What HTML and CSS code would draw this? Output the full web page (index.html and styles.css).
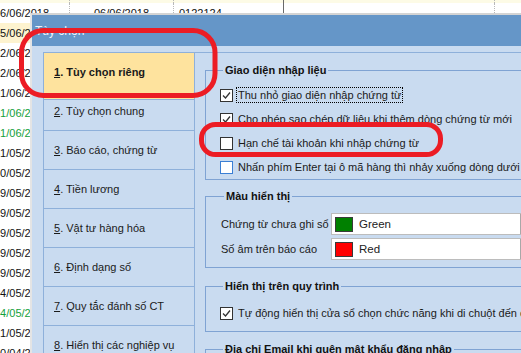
FILE: index.html
```html
<!DOCTYPE html>
<html lang="vi">
<head>
<meta charset="utf-8">
<title>Tùy chọn</title>
<link rel="stylesheet" href="styles.css">
</head>
<body>
<div class="sheet">
  <div class="row row-top"><div class="c c1"></div><div class="c c2"></div><div class="c c3"></div><div class="c c4"></div><div class="c c5"></div></div>
  <div class="row"><div class="c c1">06/06/2018</div><div class="c c2">06/06/2018</div><div class="c c3">0122124</div><div class="c c4"></div><div class="c c5"></div></div>
  <div class="row row-hl"><div class="c c1">05/06/2018</div></div>
  <div class="row"><div class="c c1">02/06/2018</div></div>
  <div class="row"><div class="c c1">02/06/2018</div></div>
  <div class="row"><div class="c c1">01/06/2018</div></div>
  <div class="row row-green"><div class="c c1">01/06/2018</div></div>
  <div class="row row-green"><div class="c c1">01/06/2018</div></div>
  <div class="row"><div class="c c1">31/05/2018</div></div>
  <div class="row"><div class="c c1">30/05/2018</div></div>
  <div class="row"><div class="c c1">29/05/2018</div></div>
  <div class="row"><div class="c c1">29/05/2018</div></div>
  <div class="row"><div class="c c1">29/05/2018</div></div>
  <div class="row"><div class="c c1">29/05/2018</div></div>
  <div class="row"><div class="c c1">29/05/2018</div></div>
  <div class="row"><div class="c c1">24/05/2018</div></div>
  <div class="row row-green"><div class="c c1">24/05/2018</div></div>
  <div class="row"><div class="c c1">21/05/2018</div></div>
  <div class="row"><div class="c c1">30/04/2018</div></div>
</div>

<div class="dialog">
  <div class="titlebar">Tùy chọn</div>
  <div class="dialog-body">
    <div class="panel">
      <div class="nav">
        <div class="nav-item selected"><u>1</u>. Tùy chọn riêng</div>
        <div class="nav-item"><u>2</u>. Tùy chọn chung</div>
        <div class="nav-item"><u>3</u>. Báo cáo, chứng từ</div>
        <div class="nav-item"><u>4</u>. Tiền lương</div>
        <div class="nav-item"><u>5</u>. Vật tư hàng hóa</div>
        <div class="nav-item"><u>6</u>. Định dạng số</div>
        <div class="nav-item"><u>7</u>. Quy tắc đánh số CT</div>
        <div class="nav-item"><u>8</u>. Hiển thị các nghiệp vụ</div>
      </div>
      <div class="content">
        <fieldset class="group group-input">
          <legend>Giao diện nhập liệu</legend>
          <div class="check-row">
            <span class="box checked"><svg viewBox="0 0 11 11" width="11" height="11"><polyline points="2,5.5 4.5,8 9,2.5" /></svg></span>
            <span class="label focus">Thu nhỏ giao diện nhập chứng từ</span>
          </div>
          <div class="check-row">
            <span class="box checked"><svg viewBox="0 0 11 11" width="11" height="11"><polyline points="2,5.5 4.5,8 9,2.5" /></svg></span>
            <span class="label">Cho phép sao chép dữ liệu khi thêm dòng chứng từ mới</span>
          </div>
          <div class="check-row">
            <span class="box"></span>
            <span class="label">Hạn chế tài khoản khi nhập chứng từ</span>
          </div>
          <div class="check-row">
            <span class="box hot"></span>
            <span class="label">Nhấn phím Enter tại ô mã hàng thì nhảy xuống dòng dưới</span>
          </div>
        </fieldset>

        <fieldset class="group group-color">
          <legend>Màu hiển thị</legend>
          <div class="color-grid">
            <span class="color-label">Chứng từ chưa ghi sổ</span>
            <div class="combo"><span class="swatch swatch-green"></span><span class="combo-text">Green</span><span class="combo-btn"></span></div>
            <span class="color-label">Số âm trên báo cáo</span>
            <div class="combo"><span class="swatch swatch-red"></span><span class="combo-text">Red</span><span class="combo-btn"></span></div>
          </div>
        </fieldset>

        <fieldset class="group group-flow">
          <legend>Hiển thị trên quy trình</legend>
          <div class="check-row">
            <span class="box checked"><svg viewBox="0 0 11 11" width="11" height="11"><polyline points="2,5.5 4.5,8 9,2.5" /></svg></span>
            <span class="label">Tự động hiển thị cửa sổ chọn chức năng khi di chuột đến các nghiệp vụ</span>
          </div>
        </fieldset>

        <fieldset class="group group-email">
          <legend>Địa chỉ Email khi quên mật khẩu đăng nhập</legend>
          <div class="check-row"></div>
        </fieldset>
      </div>
    </div>
  </div>
</div>

<svg class="marks" width="521" height="353" viewBox="0 0 521 353">
  <rect x="21.5" y="30.5" width="193.5" height="65" rx="22" ry="22" />
  <rect x="201.5" y="124.5" width="239" height="30" rx="14" ry="14" />
</svg>
</body>
</html>
```

FILE: styles.css
```css
* { box-sizing: border-box; }

html, body {
  margin: 0;
  padding: 0;
}

body {
  width: 521px;
  height: 353px;
  overflow: hidden;
  position: relative;
  background: #ffffff;
  font-family: "Liberation Sans", Arial, sans-serif;
  font-size: 11px;
  color: #1a1a1a;
}

/* background spreadsheet */
.sheet {
  margin-left: -6px;
  width: 540px;
}

.row {
  display: flex;
  height: 20px;
  align-items: center;
  white-space: nowrap;
  color: #111;
}

.row-top {
  height: 3px;
  background: #fdfbe6;
}

.row-hl { background: #fdf3cf; }
.row-green { color: #14a03a; }

.c { height: 100%; display: flex; align-items: center; overflow: hidden; }
.c1 { width: 76px; border-right: 1px dotted #b8b8b8; }
.c2 { width: 104px; padding-left: 24px; border-right: 1px dotted #b8b8b8; }
.c3 { width: 110px; padding-left: 5px; border-right: 1px solid #6a6a6a; }
.c4 { width: 211px; border-right: 1px dotted #b8b8b8; }
.c5 { flex: 1; }

/* dialog window */
.dialog {
  position: absolute;
  left: 30px;
  top: 13px;
  width: 540px;
  height: 360px;
  border-left: 2px solid #e4e4e4;
  border-top: 2px solid #d4d4d4;
  background: #c9dbf0;
}

.titlebar {
  height: 31px;
  background: #6596c8;
  color: #eef3fa;
  font-size: 12px;
  display: flex;
  align-items: center;
  padding-left: 3px;
}

.dialog-body {
  padding: 6px 0 0 11px;
}

.panel {
  display: flex;
  align-items: flex-start;
  border-top: 1px solid #8eb0da;
  border-left: 1px solid #8eb0da;
}

.nav {
  width: 151px;
  flex: none;
  border-right: 1px solid #8eb0da;
}

.nav-item {
  height: 39px;
  line-height: 38px;
  padding-left: 10px;
  border-bottom: 1px solid #8eb0da;
  white-space: nowrap;
  font-size: 11px;
  color: #1a1a1a;
}

.nav-item.selected {
  position: relative;
  height: 47px;
  margin-bottom: -8px;
  background: #fee39e;
  font-weight: bold;
}

.content {
  padding-left: 10px;
  width: 340px;
  flex: none;
}

.group {
  margin: 0;
  border: 1px solid #7fa3d3;
  min-width: 0;
  padding: 0 0 0 14px;
}

.group legend {
  font-weight: bold;
  font-size: 11px;
  line-height: 13px;
  padding: 0 2px;
  margin-left: 3px;
  color: #111;
  white-space: nowrap;
}

.group-input { margin-top: 11px; padding-top: 6px; padding-bottom: 0; }
.group-color { margin-top: 10px; padding: 10px 0 7px 15px; }
.group-flow { margin-top: 12px; padding-top: 8px; padding-bottom: 6px; }
.group-email { margin-top: 11px; padding-top: 6px; height: 40px; }

.check-row {
  display: flex;
  align-items: center;
  height: 24px;
  gap: 5px;
  white-space: nowrap;
}

.box {
  width: 13px;
  height: 13px;
  flex: none;
  border: 1px solid #333333;
  background: #ffffff;
  display: flex;
  align-items: center;
  justify-content: center;
}

.box svg polyline {
  fill: none;
  stroke: #333333;
  stroke-width: 1.3;
}

.box.hot { border-color: #3b7fd4; }

.label {
  line-height: 14px;
  padding: 0 1px;
  margin-left: -1px;
}

.label.focus {
  outline: 1px dotted #000000;
  outline-offset: 0;
}

.color-grid {
  display: grid;
  grid-template-columns: 110px 210px;
  row-gap: 3px;
  align-items: center;
}

.color-label { white-space: nowrap; }

.combo {
  height: 22px;
  background: #ffffff;
  border: 1px solid #bcbcbc;
  display: flex;
  align-items: center;
}

.swatch {
  width: 18px;
  height: 15px;
  margin-left: 3px;
  border: 1px solid #3a3a3a;
  flex: none;
}

.swatch-green { background: #008000; }
.swatch-red { background: #ff0000; }

.combo-text {
  flex: 1;
  padding-left: 6px;
  font-size: 11.5px;
  color: #222;
}

.combo-btn {
  width: 20px;
  height: 100%;
  border-left: 1px solid #a8a8a8;
  background: #f0f0f0;
}

/* annotation marks */
.marks {
  position: absolute;
  left: 0;
  top: 0;
  pointer-events: none;
}

.marks rect {
  fill: none;
  stroke: #ec1c24;
  stroke-width: 5;
}
```
